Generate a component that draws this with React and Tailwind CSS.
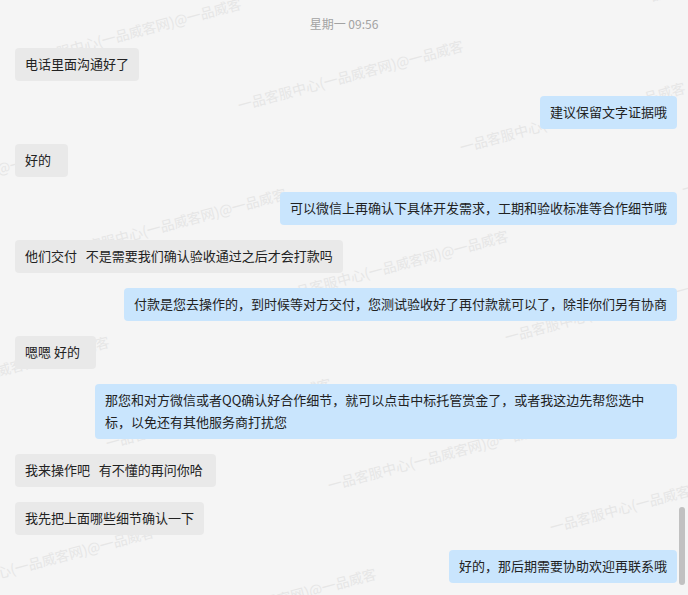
import React from "react";

const messages = [
  { side: "L", text: "电话里面沟通好了" },
  { side: "R", text: "建议保留文字证据哦" },
  { side: "L", text: "好的\u2002" },
  { side: "R", text: "可以微信上再确认下具体开发需求，工期和验收标准等合作细节哦" },
  { side: "L", text: "他们交付\u2004\u2004不是需要我们确认验收通过之后才会打款吗" },
  { side: "R", text: "付款是您去操作的，到时候等对方交付，您测试验收好了再付款就可以了，除非你们另有协商" },
  { side: "L", text: "嗯嗯 好的\u2002" },
  {
    side: "R",
    wide: true,
    text: "那您和对方微信或者QQ确认好合作细节，就可以点击中标托管赏金了，或者我这边先帮您选中\n标，以免还有其他服务商打扰您",
  },
  { side: "L", text: "我来操作吧\u2004\u2004有不懂的再问你哈\u2005" },
  { side: "L", text: "我先把上面哪些细节确认一下" },
  { side: "R", text: "好的，那后期需要协助欢迎再联系哦" },
];

const WM = "一品客服中心(一品威客网)@一品威客";

function watermarks() {
  const out = [];
  for (let r = -1; r <= 3; r++) {
    for (let c = -1; c <= 3; c++) {
      const x = 16 + 45 * r + 222 * c;
      const y = 65 + 190 * r + 42 * c;
      if (x > 700 || x < -260 || y < -10 || y > 680) continue;
      out.push({ x, y, key: `${r}-${c}` });
    }
  }
  return out;
}

export default function App() {
  return (
    <div
      className="relative w-[688px] h-[595px] overflow-hidden bg-[#f5f5f5]"
      style={{ fontFamily: '"Noto Sans CJK SC", "Noto Sans", sans-serif' }}
    >
      <div className="pointer-events-none absolute inset-0 z-0">
        {watermarks().map((w) => (
          <span
            key={w.key}
            className="absolute whitespace-nowrap text-[14px] leading-[20px] text-[#e6e6e6] origin-left -rotate-15"
            style={{ left: w.x, top: w.y - 12 }}
          >
            {WM}
          </span>
        ))}
      </div>

      <div className="relative z-10 flex flex-col pt-[15px]">
        <div className="h-[18px] mb-[15px] flex items-center justify-center text-[12px] leading-[18px] text-[#a3a3a3]">
          星期一 09:56
        </div>
        <div className="flex flex-col gap-[15px]">
          {messages.map((m, i) =>
            m.side === "L" ? (
              <div key={i} className="flex justify-start pl-[15px]">
                <div className="max-w-[582px] rounded-[4px] bg-[#e9e9e9] px-[10px] pt-[5px] pb-[6px] text-[13px] leading-[22px] text-[#222] whitespace-pre-wrap">
                  {m.text}
                </div>
              </div>
            ) : (
              <div key={i} className="flex justify-end pr-[11px]">
                <div
                  className={
                    (m.wide ? "w-[582px] " : "max-w-[582px] ") +
                    "rounded-[4px] bg-[#c9e5fd] px-[10px] pt-[5px] pb-[6px] text-[13px] leading-[22px] text-[#222] whitespace-pre-wrap"
                  }
                >
                  {m.text}
                </div>
              </div>
            )
          )}
        </div>
      </div>

      <div className="absolute right-[3px] top-[507px] z-20 h-[78px] w-[6px] rounded-full bg-[#c1c1c1]" />
    </div>
  );
}
